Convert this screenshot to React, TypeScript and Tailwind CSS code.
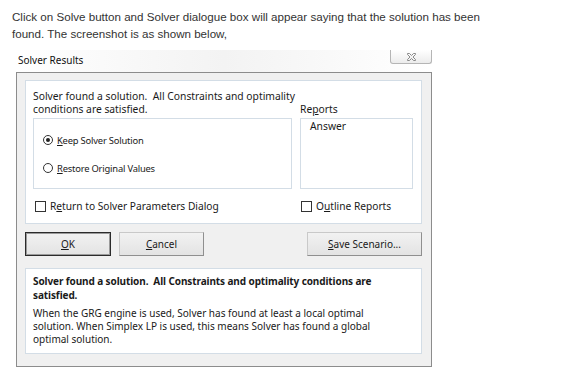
import { ReactNode } from "react";

const dlgFont = { fontFamily: '"Noto Sans", "Open Sans", sans-serif' };

function Radio({ checked, children }: { checked?: boolean; children: ReactNode }) {
  return (
    <div className="flex items-center h-[14px]">
      <span className="w-[10px] h-[10px] rounded-full border border-[#333] bg-white flex items-center justify-center">
        {checked && <span className="w-[4px] h-[4px] rounded-full bg-[#222]" />}
      </span>
      <span className="ml-[4px] text-[9.4px] text-[#1a1a1a] tracking-[-0.2px]">{children}</span>
    </div>
  );
}

function Check({ children }: { children: ReactNode }) {
  return (
    <div className="flex items-center h-[14px]">
      <span className="w-[11px] h-[11px] border border-[#333] bg-white" />
      <span className="ml-[4px] text-[10.2px] text-[#1a1a1a]">{children}</span>
    </div>
  );
}

function Btn({ w, main, children }: { w: string; main?: boolean; children: ReactNode }) {
  return (
    <div
      className={`${w} h-[24px] flex items-center justify-center text-[10px] text-[#1a1a1a] bg-gradient-to-b from-[#f2f2f2] to-[#e3e3e3] ${
        main
          ? "border border-[#2b2b2b] shadow-[inset_0_0_0_1px_#9a9a9a]"
          : "border border-[#c9c9c9] border-r-[#8f8f8f] border-b-[#8f8f8f]"
      }`}
    >
      {children}
    </div>
  );
}

export default function App() {
  return (
    <div className="w-[565px] h-[373px] bg-white overflow-hidden">
      <p
        className="pl-[12px] pt-[8px] text-[11.6px] leading-[17px] text-[#333]"
        style={{ fontFamily: '"Liberation Sans", Arial, sans-serif' }}
      >
        Click on Solve button and Solver dialogue box will appear saying that the solution has been
        <br />
        found. The screenshot is as shown below,
      </p>

      <div className="ml-[16px] mt-[8px] w-[416px]" style={dlgFont}>
        {/* title bar */}
        <div className="h-[22px] flex items-start justify-between bg-gradient-to-r from-white via-[#f3f3f3] to-white">
          <span className="mt-[3px] ml-[2px] text-[10px] text-[#111]">Solver Results</span>
          <div className="w-[42px] h-[14px] border border-t-0 border-[#b5b5b5] rounded-b-[3px] bg-gradient-to-b from-white to-[#ececec] flex items-center justify-center">
            <svg width="9" height="8" viewBox="0 0 9 8">
              <path
                d="M0.5 0.5 H2.5 L4.5 2.5 L6.5 0.5 H8.5 V1.5 L6 4 L8.5 6.5 V7.5 H6.5 L4.5 5.5 L2.5 7.5 H0.5 V6.5 L3 4 L0.5 1.5 Z"
                fill="none"
                stroke="#8a8a8a"
                strokeWidth="1"
              />
            </svg>
          </div>
        </div>

        {/* frame */}
        <div className="h-[295px] border border-[#8c8c8c] bg-[#f0f0f0] pl-[8px] pr-[9px] pt-[7px]">
          {/* white panel */}
          <div className="h-[144px] bg-white border border-[#d3dde6] pl-[7px] pt-[9px]">
            <div className="text-[10.3px] leading-[13px] text-[#1a1a1a] whitespace-nowrap">
              Solver found a solution.&nbsp; All Constraints and optimality
            </div>
            <div className="grid grid-cols-[259px_113px] gap-x-[8px] text-[10.3px] leading-[13px] text-[#1a1a1a]">
              <div>conditions are satisfied.</div>
              <div>
                Re<span className="underline">p</span>orts
              </div>
              <div className="mt-[2px] h-[71px] border border-[#d3dde6] pl-[9px] pt-[14px] flex flex-col gap-[14px]">
                <Radio checked>
                  <span className="underline">K</span>eep Solver Solution
                </Radio>
                <Radio>
                  <span className="underline">R</span>estore Original Values
                </Radio>
              </div>
              <div className="mt-[2px] h-[71px] border border-[#d3dde6] pl-[9px] pt-[1px]">Answer</div>
              <div className="mt-[10px] pl-[2px]">
                <Check>
                  R<span className="underline">e</span>turn to Solver Parameters Dialog
                </Check>
              </div>
              <div className="mt-[10px] pl-[1px]">
                <Check>
                  O<span className="underline">u</span>tline Reports
                </Check>
              </div>
            </div>
          </div>

          {/* buttons */}
          <div className="mt-[8px] flex items-center">
            <Btn w="w-[86px]" main>
              <span className="underline">O</span>K
            </Btn>
            <div className="ml-[8px]">
              <Btn w="w-[85px]">
                <span className="underline">C</span>ancel
              </Btn>
            </div>
            <div className="ml-auto">
              <Btn w="w-[115px]">
                <span className="underline">S</span>ave Scenario...
              </Btn>
            </div>
          </div>

          {/* info */}
          <div className="mt-[12px] h-[86px] bg-white border border-[#d3dde6] pl-[7px] pt-[5px] text-[10px] text-[#1a1a1a]">
            <div className="font-bold leading-[14px] tracking-[-0.1px]">
              Solver found a solution.&nbsp; All Constraints and optimality conditions are
              <br />
              satisfied.
            </div>
            <div className="mt-[5px] leading-[13px]">
              When the GRG engine is used, Solver has found at least a local optimal
              <br />
              solution. When Simplex LP is used, this means Solver has found a global
              <br />
              optimal solution.
            </div>
          </div>
        </div>
      </div>
    </div>
  );
}
